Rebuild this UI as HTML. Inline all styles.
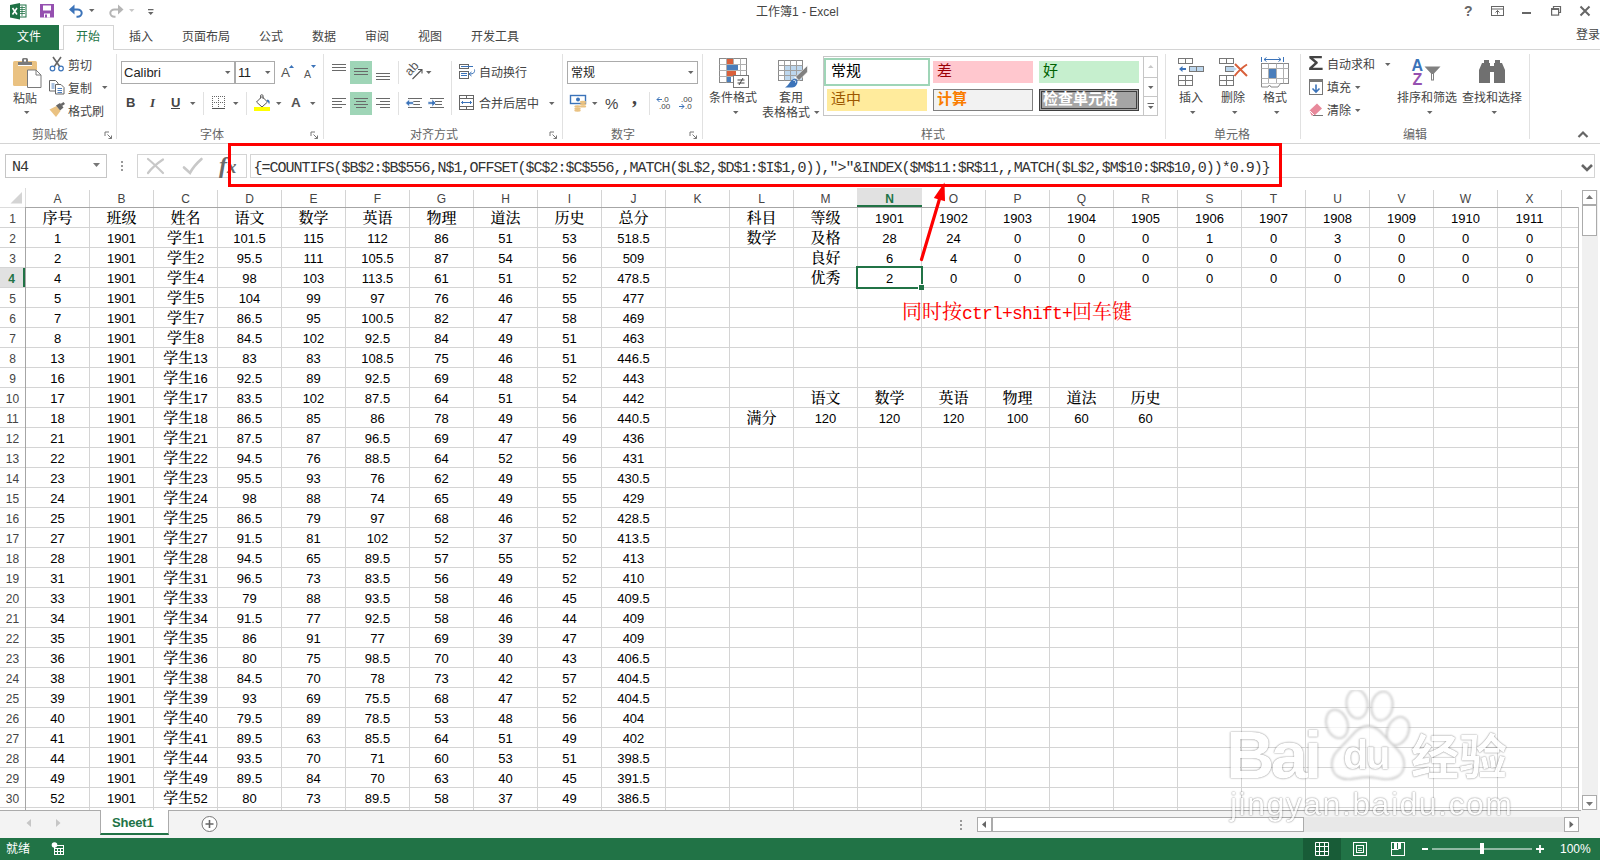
<!DOCTYPE html>
<html lang="zh-CN"><head><meta charset="utf-8"><title>工作簿1 - Excel</title>
<style>
*{box-sizing:border-box;margin:0;padding:0}
html,body{width:1600px;height:860px;overflow:hidden;background:#fff}
body{position:relative;font-family:"Liberation Sans","Noto Sans CJK SC",sans-serif;font-size:12px;color:#444}
.a{position:absolute}
.ui{position:absolute;white-space:nowrap;font-size:12px;line-height:14px;color:#444}
.sep{position:absolute;width:1px;background:#e1e1e1;top:54px;height:85px}
.glabel{position:absolute;top:128px;font-size:12px;line-height:14px;color:#666;white-space:nowrap;transform:translateX(-50%)}
.tab{position:absolute;top:30px;font-size:12px;line-height:14px;color:#444;white-space:nowrap}
/* grid */
#grid{position:absolute;left:0;top:188px;width:1581px;height:624px;overflow:hidden;
 background-color:#fff;}
#gl{position:absolute;left:25px;top:207px;width:1553px;height:603px;
 background-image:linear-gradient(to right,#d4d4d4 1px,transparent 1px),linear-gradient(to bottom,#d4d4d4 1px,transparent 1px);
 background-size:64px 20px;background-position:0 0}
.ch{position:absolute;top:190px;width:63px;height:17px;text-align:center;font-size:12px;line-height:19px;color:#444}
.ch.sel{background:#e1e1e1;color:#217346;font-weight:bold;border-bottom:2px solid #217346;top:188px;height:19px;line-height:23px;width:65px;margin-left:-1px}
.rh{position:absolute;left:0;width:25px;height:19px;text-align:center;font-size:12px;line-height:22px;color:#444}
.rh.sel{background:#e1e1e1;color:#217346;font-weight:bold;border-right:2px solid #217346}
.c{position:absolute;width:63px;height:19px;text-align:center;font-size:13px;line-height:22px;color:#000;white-space:nowrap;overflow:visible}
.wmt{position:absolute;white-space:nowrap;color:#fff;font-family:"Liberation Sans",sans-serif;text-shadow:0 0 2px rgba(0,0,0,.55),0 0 1px rgba(0,0,0,.45)}
.gal{font-size:15px;line-height:18px}
.cj{font-family:"Noto Serif CJK SC","Noto Sans CJK SC",serif;font-size:15px;line-height:1px;font-weight:500}
</style></head><body>

<!-- ===== title bar ===== -->
<div class="ui" style="left:756px;top:5px;font-size:12px;line-height:14px;color:#444">工作簿1 - Excel</div>
<svg class="a" style="left:0;top:0" width="170" height="24" viewBox="0 0 170 24">
 <!-- excel logo -->
 <rect x="17" y="5" width="9" height="12" fill="#fff" stroke="#1e7145" stroke-width="1"/>
 <path d="M19 7.5h6M19 9.5h6M19 11.500h6M19 13.500h6M22 6v10" stroke="#1e7145" stroke-width="0.8" fill="none"/>
 <path d="M10 5l10-2v16.500l-10-2z" fill="#1e7145"/>
 <path d="M12.500 8l4.500 6.500M17 8l-4.500 6.500" stroke="#fff" stroke-width="1.600" fill="none"/>
 <!-- save -->
 <path d="M40 4h14v13.500h-14z" fill="#9550b0"/>
 <rect x="43" y="5.500" width="8" height="5" fill="#fff"/>
 <rect x="44" y="13.500" width="6" height="4" fill="#fff"/><rect x="45" y="14.500" width="2" height="3" fill="#9550b0"/>
 <!-- undo -->
 <path d="M72 9.500h5.500a4.200 3.600 0 0 1 0 7.200h-1" stroke="#3b73b9" stroke-width="2" fill="none"/>
 <path d="M69 9.500l5.500-5v10z" fill="#3b73b9"/>
 <path d="M89 9h5.500l-2.750 3z" fill="#666"/>
 <!-- redo -->
 <path d="M120 9.500h-5.500a4.200 3.600 0 0 0 0 7.200h1" stroke="#b5b5b5" stroke-width="2" fill="none"/>
 <path d="M123.500 9.500l-5.500-5v10z" fill="#b5b5b5"/>
 <path d="M129 9h5.500l-2.750 3z" fill="#c8c8c8"/>
 <!-- customize -->
 <path d="M148 9h5.500v1.200h-5.500z M148 12h5.500l-2.750 3z" fill="#666"/>
</svg>
<div class="ui" style="left:1464px;top:3px;font-size:14px;line-height:16px;font-weight:bold;color:#666">?</div>
<svg class="a" style="left:1488px;top:3px" width="110" height="18" viewBox="0 0 110 18">
 <rect x="3.500" y="3.500" width="12" height="9" fill="none" stroke="#666" stroke-width="1"/>
 <path d="M3.500 6h12" stroke="#666" stroke-width="1"/>
 <path d="M9.500 11.500v-4M7.500 9.500l2-2l2 2" stroke="#666" stroke-width="1" fill="none"/>
 <rect x="34" y="9" width="9" height="2" fill="#666"/>
 <path d="M65.500 5.500v-2h7v6h-2" stroke="#666" stroke-width="1.200" fill="none"/>
 <rect x="63.600" y="6.100" width="7" height="6" fill="none" stroke="#666" stroke-width="1.200"/>
 <path d="M63 6h8" stroke="#666" stroke-width="1.800"/>
 <path d="M92.500 3.500l9 9M101.500 3.500l-9 9" stroke="#666" stroke-width="2" fill="none"/>
</svg>


<!-- ===== tabs ===== -->
<div class="a" style="left:0;top:49px;width:1600px;height:1px;background:#d4d4d4"></div>
<div class="a" style="left:0;top:25px;width:59px;height:25px;background:#217346"></div>
<div class="tab" style="left:17px;color:#fff">文件</div>
<div class="a" style="left:63px;top:25px;width:51px;height:25px;border:1px solid #d4d4d4;border-bottom:none;background:#fff"></div>
<div class="tab" style="left:76px;color:#217346">开始</div>
<div class="tab" style="left:129px">插入</div>
<div class="tab" style="left:182px">页面布局</div>
<div class="tab" style="left:259px">公式</div>
<div class="tab" style="left:312px">数据</div>
<div class="tab" style="left:365px">审阅</div>
<div class="tab" style="left:418px">视图</div>
<div class="tab" style="left:471px">开发工具</div>
<div class="ui" style="left:1576px;top:28px;font-size:12px">登录</div>

<!-- ===== ribbon ===== -->
<div class="a" style="left:0;top:143px;width:1600px;height:1px;background:#d4d4d4"></div>
<div class="sep" style="left:116px"></div><div class="sep" style="left:323px"></div><div class="sep" style="left:562px"></div>
<div class="sep" style="left:702px"></div><div class="sep" style="left:1165px"></div><div class="sep" style="left:1300px"></div><div class="sep" style="left:1529px"></div>
<div class="glabel" style="left:50px">剪贴板</div>
<div class="glabel" style="left:212px">字体</div>
<div class="glabel" style="left:434px">对齐方式</div>
<div class="glabel" style="left:623px">数字</div>
<div class="glabel" style="left:933px">样式</div>
<div class="glabel" style="left:1232px">单元格</div>
<div class="glabel" style="left:1415px">编辑</div>
<!-- clipboard texts -->
<div class="ui" style="left:13px;top:92px">粘贴</div>
<div class="ui" style="left:68px;top:59px">剪切</div>
<div class="ui" style="left:68px;top:82px">复制</div>
<div class="ui" style="left:68px;top:105px">格式刷</div>
<!-- font group -->
<div class="a" style="left:121px;top:61px;width:114px;height:23px;border:1px solid #ababab;background:#fff"></div>
<div class="a" style="left:235px;top:61px;width:40px;height:23px;border:1px solid #ababab;background:#fff"></div>
<div class="ui" style="left:124px;top:65px;font-size:13px;line-height:15px;color:#1e1e1e">Calibri</div>
<div class="ui" style="left:238px;top:65px;font-size:13px;line-height:15px;color:#1e1e1e;letter-spacing:-0.5px">11</div>
<div class="ui" style="left:281px;top:65px;font-size:13.500px;line-height:15px;color:#555">A</div>
<div class="ui" style="left:304px;top:68px;font-size:10.500px;line-height:12px;color:#555">A</div>
<div class="ui" style="left:126px;top:95px;font-size:13px;line-height:15px;font-weight:bold;color:#444">B</div>
<div class="ui" style="left:150px;top:95px;font-size:13px;line-height:15px;font-style:italic;font-family:'Liberation Serif',serif;font-weight:bold;color:#444">I</div>
<div class="ui" style="left:171px;top:95px;font-size:13px;line-height:15px;color:#444;font-weight:bold">U</div>
<div class="a" style="left:171px;top:108px;width:9px;height:1px;background:#444"></div>
<div class="ui" style="left:291px;top:95px;font-size:13.500px;line-height:15px;font-weight:bold;color:#555">A</div>
<div class="a" style="left:203px;top:92px;width:1px;height:23px;background:#e1e1e1"></div>
<div class="a" style="left:246px;top:92px;width:1px;height:23px;background:#e1e1e1"></div>
<!-- alignment group -->
<div class="a" style="left:350px;top:61px;width:22px;height:23px;background:#9fd5b7"></div>
<div class="a" style="left:350px;top:92px;width:22px;height:23px;background:#9fd5b7"></div>
<div class="a" style="left:398px;top:61px;width:1px;height:23px;background:#e1e1e1"></div>
<div class="a" style="left:398px;top:92px;width:1px;height:23px;background:#e1e1e1"></div>
<div class="a" style="left:451px;top:61px;width:1px;height:54px;background:#e1e1e1"></div>
<div class="ui" style="left:479px;top:66px">自动换行</div>
<div class="ui" style="left:479px;top:97px">合并后居中</div>
<!-- number group -->
<div class="a" style="left:567px;top:61px;width:131px;height:23px;border:1px solid #ababab;background:#fff"></div>
<div class="ui" style="left:571px;top:66px;color:#1e1e1e">常规</div>
<div class="ui" style="left:605px;top:95px;font-size:15px;line-height:18px;color:#444">%</div>
<div class="ui" style="left:632px;top:86px;font-size:20px;line-height:22px;font-weight:bold;font-family:'Liberation Serif',serif;color:#444">,</div>
<div class="a" style="left:649px;top:92px;width:1px;height:23px;background:#e1e1e1"></div>
<!-- styles group -->
<div class="ui" style="left:709px;top:91px">条件格式</div>
<div class="ui" style="left:779px;top:91px">套用</div>
<div class="ui" style="left:762px;top:106px">表格格式</div>
<div class="a" style="left:823px;top:56px;width:335px;height:60px;border:1px solid #c6c6c6;background:#fff"></div>
<div class="a" style="left:1143px;top:56px;width:15px;height:60px;border:1px solid #c6c6c6;background:#fff"></div>
<div class="a" style="left:1143px;top:77px;width:15px;height:20px;border:1px solid #c6c6c6;border-left:none;border-right:none"></div>
<div class="a" style="left:824px;top:58px;width:106px;height:28px;border:2px solid #9fd5b7;background:#fff"></div>
<div class="ui gal" style="left:831px;top:62px;color:#000">常规</div>
<div class="a" style="left:933px;top:61px;width:100px;height:22px;background:#ffc7ce"></div>
<div class="ui gal" style="left:937px;top:62px;color:#9c0006">差</div>
<div class="a" style="left:1039px;top:61px;width:100px;height:22px;background:#c6efce"></div>
<div class="ui gal" style="left:1043px;top:62px;color:#006100">好</div>
<div class="a" style="left:827px;top:89px;width:100px;height:22px;background:#ffeb9c"></div>
<div class="ui gal" style="left:831px;top:90px;color:#9c5700">适中</div>
<div class="a" style="left:933px;top:89px;width:100px;height:22px;background:#f2f2f2;border:1px solid #7f7f7f"></div>
<div class="ui gal" style="left:937px;top:90px;color:#fa7d00;font-weight:bold">计算</div>
<div class="a" style="left:1039px;top:89px;width:100px;height:22px;background:#a5a5a5;border:3px double #3f3f3f"></div>
<div class="ui gal" style="left:1043px;top:90px;color:#fff;font-weight:bold">检查单元格</div>
<!-- cells group -->
<div class="ui" style="left:1179px;top:91px">插入</div>
<div class="ui" style="left:1221px;top:91px">删除</div>
<div class="ui" style="left:1263px;top:91px">格式</div>
<!-- editing group -->
<div class="ui" style="left:1327px;top:58px">自动求和</div>
<div class="ui" style="left:1327px;top:81px">填充</div>
<div class="ui" style="left:1327px;top:104px">清除</div>
<div class="ui" style="left:1397px;top:91px">排序和筛选</div>
<div class="ui" style="left:1462px;top:91px">查找和选择</div>
<div class="ui" style="left:1308px;top:51px;font-size:21px;line-height:24px;font-weight:bold;color:#444;transform:scaleX(1.22);transform-origin:0 0">Σ</div>
<svg class="a" style="left:0;top:0" width="720" height="145" viewBox="0 0 720 145" font-family="Liberation Sans, sans-serif">
<defs>
 <path id="dd" d="M0 0h5.500l-2.750 3z" fill="#666"/>
 <path id="dl" d="M0 0h4M0 0v4M2.500 2.500l4 4M6.500 3.500v3h-3" stroke="#777" stroke-width="1" fill="none"/>
</defs>
<!-- paste -->
<rect x="13" y="61" width="24" height="25" rx="1.500" fill="#eac282"/>
<path d="M18 65v-3h4v-2.500a1.500 1.500 0 0 1 1.500-1.500h3a1.500 1.500 0 0 1 1.500 1.500v2.500h4v3z" fill="#7a7a7a"/><rect x="24" y="59.500" width="2" height="2" fill="#fff"/><rect x="18" y="65" width="14" height="1" fill="#fff"/>
<path d="M27.500 70h8.500l5 5v12.500h-13.500z" fill="#fff" stroke="#7a7a7a" stroke-width="1"/>
<path d="M36 70v5h5" fill="none" stroke="#7a7a7a" stroke-width="1"/>
<use href="#dd" x="24" y="111"/>
<!-- scissors -->
<path d="M53 57l7 10M61 57l-7 10" stroke="#666" stroke-width="1.600" fill="none"/>
<circle cx="52.500" cy="68.500" r="2.300" fill="#fff" stroke="#3b73b9" stroke-width="1.200"/>
<circle cx="61" cy="68.500" r="2.300" fill="#fff" stroke="#3b73b9" stroke-width="1.200"/>
<!-- copy -->
<path d="M49.500 80.500h6l2.500 2.500v8h-8.500z" fill="#fff" stroke="#666" stroke-width="1"/>
<path d="M51.500 84h3M51.500 86h3M51.500 88h3" stroke="#3b73b9" stroke-width="0.900"/>
<path d="M55.500 84.500h5.500l3 3v6.500h-8.500z" fill="#fff" stroke="#666" stroke-width="1"/>
<path d="M57.500 88.500h4.500M57.500 90.500h4.500M57.500 92.500h4.500" stroke="#3b73b9" stroke-width="0.900"/>
<use href="#dd" x="102" y="86"/>
<!-- format painter -->
<path d="M49.500 109.500l7-3.500l4 5l-4.500 6z" fill="#eac282"/>
<path d="M56 105.500l4-2.500l3.500 4.500l-3.500 3z" fill="#666"/>
<path d="M60.500 104l3-2l1.500 2l-3 2z" fill="#666"/>
<use href="#dl" x="105" y="132"/>
<!-- font group -->
<use href="#dd" x="225" y="71"/><use href="#dd" x="265" y="71"/>
<path d="M289 68l2.500-3l2.500 3z" fill="#3b73b9"/>
<path d="M311 65l2.500 3l2.500-3z" fill="#3b73b9"/>
<use href="#dd" x="190" y="102"/>
<!-- borders icon -->
<path d="M212 96.500h13M212 102.500h13M212.500 96v12M218.500 96v12M224.500 96v12" stroke="#666" stroke-width="1" stroke-dasharray="1 1" fill="none" shape-rendering="crispEdges"/>
<path d="M212 108.500h13" stroke="#555" stroke-width="1"/>
<use href="#dd" x="233" y="102"/>
<!-- fill bucket -->
<path d="M256.500 102l5.500-5.500l5.500 5.500l-5.500 5z" fill="#fff" stroke="#555" stroke-width="1"/>
<path d="M260.500 98.500v-2.500a1.300 1.300 0 0 1 2.600 0v3" fill="none" stroke="#555" stroke-width="0.900"/>
<path d="M267.500 99.500c2 .5 3 2.500 1.500 5c-.3-2-1-3-2.500-3.500z" fill="#3b73b9"/>
<rect x="254" y="107" width="16" height="4" fill="#ffff00"/>
<use href="#dd" x="276" y="102"/>
<use href="#dd" x="310" y="102"/>
<use href="#dl" x="311" y="132"/>
<!-- alignment -->
<g stroke="#696969" stroke-width="1" fill="none">
<path d="M332 64.500h14M332 67.500h14M332 70.500h14"/>
<path d="M354 68.500h14M354 71.500h14M354 74.500h14"/>
<path d="M376 73.500h14M376 76.500h14M376 79.500h14"/>
<path d="M332 98.500h14M332 101.500h10M332 104.500h14M332 107.500h10"/>
<path d="M354 98.500h14M356 101.500h10M354 104.500h14M356 107.500h10"/>
<path d="M376 98.500h14M380 101.500h10M376 104.500h14M380 107.500h10"/>
<path d="M408 98.500h14M413 101.500h7M413 104.500h7M408 107.500h14"/>
<path d="M430 98.500h14M435 101.500h7M435 104.500h7M430 107.500h14"/>
</g>
<path d="M405.500 103l4-3.800v2.600h4v2.400h-4v2.600z" fill="#3b73b9" stroke="#fff" stroke-width="0.600"/>
<path d="M436 103l-4-3.800v2.600h-4v2.400h4v2.600z" fill="#3b73b9" stroke="#fff" stroke-width="0.600"/>
<!-- orientation -->
<text x="0" y="0" font-size="12.500" fill="#555" transform="translate(410 76.500) rotate(-48)">ab</text>
<path d="M412.500 79l9.500-9.500M418 69.500h4v4" stroke="#555" stroke-width="1.100" fill="none"/>
<use href="#dd" x="426" y="71"/>
<!-- wrap text -->
<rect x="459.500" y="64.500" width="9" height="4" fill="#fff" stroke="#666" stroke-width="1"/>
<path d="M461 66.500h12" stroke="#3b73b9" stroke-width="1"/>
<rect x="459.500" y="71.500" width="9" height="7" fill="#fff" stroke="#666" stroke-width="1"/>
<path d="M461 73.500h6M461 75.500h6" stroke="#3b73b9" stroke-width="1"/>
<path d="M474.500 69.500c.5 3-1 4.500-5 4.500M471.500 72l-2.500 2l2.500 2" stroke="#3b73b9" stroke-width="1" fill="none"/>
<!-- merge -->
<rect x="459.500" y="95.500" width="14" height="14" fill="#fff" stroke="#666" stroke-width="1"/>
<path d="M459.500 98.500h14M459.500 106.500h14M466.500 95.500v3M466.500 106.500v3" stroke="#666" stroke-width="1"/>
<path d="M461.500 102.500h10M463 101l-1.500 1.500l1.500 1.500M470 101l1.500 1.500l-1.500 1.500" stroke="#3b73b9" stroke-width="1" fill="none"/>
<use href="#dd" x="549" y="102"/>
<use href="#dl" x="550" y="132"/>
<!-- number -->
<use href="#dd" x="688" y="71"/>
<rect x="570.500" y="95.500" width="15" height="8" fill="#fff" stroke="#3b73b9" stroke-width="1.400"/>
<circle cx="578" cy="99.500" r="2" fill="#3b73b9"/>
<g fill="#eac282"><ellipse cx="583" cy="102" rx="3.200" ry="1.200"/><ellipse cx="583" cy="104.200" rx="3.200" ry="1.200"/><ellipse cx="583" cy="106.400" rx="3.200" ry="1.200"/>
<ellipse cx="577.500" cy="106.500" rx="3.200" ry="1.200"/><ellipse cx="577.500" cy="108.700" rx="3.200" ry="1.200"/><ellipse cx="577.500" cy="110.500" rx="3.200" ry="1.200"/></g>
<use href="#dd" x="592" y="102"/>
<text x="662" y="102" font-size="8" fill="#444">.0</text><text x="659" y="109" font-size="8" fill="#444">.00</text>
<path d="M657 99.500h5M659.500 97l-2.500 2.500l2.500 2.500" stroke="#3b73b9" stroke-width="1" fill="none"/>
<text x="681" y="102" font-size="8" fill="#444">.00</text><text x="685" y="109" font-size="8" fill="#444">.0</text>
<path d="M679 106.500h5M681.500 104l2.500 2.500l-2.500 2.500" stroke="#3b73b9" stroke-width="1" fill="none"/>
<use href="#dl" x="690" y="132"/>
</svg>
<svg class="a" style="left:700px;top:0" width="900" height="145" viewBox="700 0 900 145" font-family="Liberation Sans, sans-serif">
<defs>
 <path id="dd2" d="M0 0h5.500l-2.750 3z" fill="#666"/>
</defs>
<!-- conditional formatting -->
<rect x="719.500" y="58.500" width="27" height="24" fill="#fff" stroke="#8a8a8a" stroke-width="1"/>
<path d="M726.500 58.500v24M733.500 58.500v24M740.500 58.500v24M719.500 64.500h27M719.500 70.500h27M719.500 76.500h27" stroke="#b0b0b0" stroke-width="1" fill="none"/>
<rect x="727" y="59" width="6" height="5" fill="#d9603b"/><rect x="727" y="65" width="11" height="5" fill="#4a7ebb"/>
<rect x="727" y="71" width="9" height="5" fill="#d9603b"/><rect x="727" y="77" width="4" height="5" fill="#4a7ebb"/>
<rect x="733.500" y="75.500" width="15" height="12" fill="#fff" stroke="#777" stroke-width="1"/>
<path d="M737.500 80h7M737.500 83h7M743 78l-4 7" stroke="#444" stroke-width="1" fill="none"/>
<use href="#dd2" x="733" y="111"/>
<!-- format as table -->
<rect x="778.500" y="60.500" width="24" height="20" fill="#fff" stroke="#8a8a8a" stroke-width="1"/>
<rect x="785" y="66" width="17" height="14" fill="#bdd7ee"/>
<path d="M784.500 60.500v20M790.500 60.500v20M796.500 60.500v20M778.500 65.500h24M778.500 70.500h24M778.500 75.500h24" stroke="#a0a0a0" stroke-width="1" fill="none"/>
<path d="M807.500 65.500v6.500l-8.500 8.500l-3.500-3.500z" fill="#808080" stroke="#fff" stroke-width="0.600"/>
<path d="M796.500 78.500l-2-1.500" stroke="#fff" stroke-width="1.200"/>
<path d="M785 87.500c4-2 5-7 8.500-8.500c3-1 5 2 3.500 5c-1 2.500-3 3.500-5 3.500z" fill="#3b73b9"/>
<path d="M793.500 80.500c1.500-.5 2.500.5 2 2" stroke="#fff" stroke-width="1" fill="none"/>
<use href="#dd2" x="814" y="111"/>
<!-- gallery scroll arrows -->
<path d="M1148 68h5.500l-2.750-3z" fill="#c8c8c8"/>
<use href="#dd2" x="1148" y="86"/>
<path d="M1147.500 103.500h6.500" stroke="#666" stroke-width="1"/><use href="#dd2" x="1148" y="106"/>
<!-- insert -->
<g fill="#fff" stroke="#777" stroke-width="1">
<rect x="1178.500" y="58.500" width="14" height="5"/><path d="M1185.500 58.500v5"/>
<rect x="1178.500" y="75.500" width="14" height="10"/><path d="M1185.500 75.500v10M1178.500 80.500h14"/>
<rect x="1219.500" y="58.500" width="14" height="5"/><path d="M1226.500 58.500v5"/>
<rect x="1219.500" y="75.500" width="14" height="10"/><path d="M1226.500 75.500v10M1219.500 80.500h14"/>
</g>
<rect x="1189.500" y="66.500" width="14" height="5" fill="#bdd7ee" stroke="#777" stroke-width="1"/><path d="M1196.500 66.500v5" stroke="#777"/>
<path d="M1179 69l3.500-3v2h3.500v2h-3.500v2z" fill="#3b73b9"/>
<use href="#dd2" x="1190" y="111"/>
<!-- delete -->
<rect x="1225.500" y="66.500" width="8" height="5" fill="#bdd7ee" stroke="#777" stroke-width="1"/><path d="M1233 66.500l4 2.500l-4 2.500" fill="#bdd7ee"/>
<path d="M1235 64l12 12M1247 64.500c-5 3-9 7-12.500 11.500" stroke="#d9603b" stroke-width="2" fill="none"/>
<use href="#dd2" x="1232" y="111"/>
<!-- format -->
<path d="M1261.500 57v5M1283.500 57v5M1264 59.500h17M1266.500 57.500l-2.500 2l2.500 2M1278.500 57.500l2.500 2l-2.500 2" stroke="#3b73b9" stroke-width="1" fill="none"/>
<rect x="1261.500" y="63.500" width="27" height="20" fill="#fff" stroke="#8a8a8a" stroke-width="1"/>
<path d="M1268.500 63.500v20M1276.500 63.500v20M1283.500 63.500v20M1261.500 68.500h27M1261.500 78.500h27" stroke="#b0b0b0" stroke-width="1" fill="none"/>
<rect x="1269" y="69" width="7" height="9" fill="#4a7ebb"/>
<path d="M1261.500 83.500v3.500h6.500l1.500-2l1.500 2h7l2.500-3.500" stroke="#8a8a8a" stroke-width="1" fill="#fff"/>
<use href="#dd2" x="1274" y="111"/>
<!-- autosum dd -->
<use href="#dd2" x="1385" y="63"/>
<!-- fill -->
<rect x="1309.500" y="79.500" width="13" height="15" fill="#fff" stroke="#777" stroke-width="1"/><rect x="1309" y="79" width="14" height="3" fill="#777"/>
<path d="M1316 84.500v7M1312.500 88.500l3.500 3.500l3.500-3.500" stroke="#3b73b9" stroke-width="1.600" fill="none"/>
<use href="#dd2" x="1355" y="86"/>
<!-- clear -->
<path d="M1309.500 110.500l7.500-7l5 5l-7.500 7h-3z" fill="#e8899b"/><path d="M1309.500 110.500l5 5" stroke="#fff" stroke-width="1"/>
<path d="M1313 115.500h10" stroke="#777" stroke-width="1"/>
<use href="#dd2" x="1355" y="109"/>
<!-- sort & filter -->
<text x="1411.500" y="71" font-size="16" font-weight="bold" fill="#3b73b9">A</text>
<text x="1412.500" y="85" font-size="16" font-weight="bold" fill="#9550b0">Z</text>
<path d="M1424.500 66.500h16l-6.500 7v7h-3v-7z" fill="#808080"/><rect x="1432" y="74" width="1" height="5.500" fill="#fff"/>
<use href="#dd2" x="1427" y="111"/>
<!-- binoculars -->
<g fill="#707070">
<path d="M1484 60h5v3h1v20h-11v-13l3-7h2z"/><path d="M1495 60h5v3h2l3 7v13h-11v-20h1z"/><rect x="1489" y="66" width="6" height="6"/>
</g>
<use href="#dd2" x="1491.500" y="111"/>
<path d="M1578.500 137l4.500-4.500l4.500 4.500" stroke="#666" stroke-width="2.200" fill="none"/>
</svg>



<!-- ===== formula bar ===== -->
<div class="a" style="left:5px;top:154px;width:102px;height:24px;border:1px solid #c6c6c6;background:#fff"></div>
<div class="a" style="left:12px;top:159px;font-family:'Liberation Mono','Noto Serif CJK SC',monospace;font-size:15px;line-height:18px;letter-spacing:-1px;color:#333">N4</div>
<div class="a" style="left:137px;top:154px;width:110px;height:24px;border:1px solid #d4d4d4;background:#fff"></div>
<div class="a" style="left:250px;top:154px;width:1345px;height:24px;border:1px solid #d4d4d4;background:#fff"></div>
<div class="a" id="ftext" style="left:253.500px;top:160px;font-family:'Liberation Mono',monospace;font-size:15px;line-height:18px;letter-spacing:-1px;color:#333;white-space:pre">{=COUNTIFS($B$2:$B$556,N$1,OFFSET($C$2:$C$556,,MATCH($L$2,$D$1:$I$1,0)),"&gt;"&amp;INDEX($M$11:$R$11,,MATCH($L$2,$M$10:$R$10,0))*0.9)}</div>
<svg class="a" style="left:85px;top:150px" width="170" height="32" viewBox="85 150 170 32">
 <path d="M93 163h7l-3.500 4z" fill="#777"/>
 <rect x="121" y="161" width="2" height="2" fill="#999"/><rect x="121" y="165" width="2" height="2" fill="#999"/><rect x="121" y="169" width="2" height="2" fill="#999"/>
 <path d="M148 159c5 4 10 9 15 14M163 159.500c-6 4-11 8-15 13.500" stroke="#c8c8c8" stroke-width="2.200" fill="none" stroke-linecap="round"/>
 <path d="M184 167.500l6 5.500c3-6 7-10 11.500-14" stroke="#c8c8c8" stroke-width="2.600" fill="none" stroke-linecap="round"/>
</svg>
<div class="a" style="left:219px;top:152px;font-family:'Liberation Serif',serif;font-style:italic;font-weight:bold;font-size:24px;line-height:26px;color:#6a6a6a;letter-spacing:0px">f<span style="font-size:19px;letter-spacing:0">x</span></div>
<svg class="a" style="left:1578px;top:160px" width="18" height="16" viewBox="1578 160 18 16"><path d="M1582 165l5 5l5-5" stroke="#666" stroke-width="2.600" fill="none"/></svg>


<!-- ===== grid ===== -->
<div id="gl"></div>
<div class="a" style="left:0;top:207px;width:25px;height:601px;background-image:linear-gradient(to bottom,#d4d4d4 1px,transparent 1px);background-size:25px 20px"></div>
<div class="a" style="left:25px;top:190px;width:1553px;height:17px;background-image:linear-gradient(to right,#d4d4d4 1px,transparent 1px);background-size:64px 17px"></div>
<div class="a" style="left:25px;top:188px;width:1px;height:20px;background:#dcdcdc"></div><div class="a" style="left:25px;top:207px;width:1px;height:603px;background:#a6a6a6"></div>
<div class="a" style="left:0;top:207px;width:25px;height:1px;background:#dcdcdc"></div><div class="a" style="left:25px;top:207px;width:1554px;height:1px;background:#a6a6a6"></div>
<svg class="a" style="left:8px;top:190px" width="16" height="16" viewBox="0 0 16 16"><path d="M14 2v11.500h-11.500z" fill="#d4d4d4"/></svg>
<div class="ch" style="left:26px">A</div>
<div class="ch" style="left:90px">B</div>
<div class="ch" style="left:154px">C</div>
<div class="ch" style="left:218px">D</div>
<div class="ch" style="left:282px">E</div>
<div class="ch" style="left:346px">F</div>
<div class="ch" style="left:410px">G</div>
<div class="ch" style="left:474px">H</div>
<div class="ch" style="left:538px">I</div>
<div class="ch" style="left:602px">J</div>
<div class="ch" style="left:666px">K</div>
<div class="ch" style="left:730px">L</div>
<div class="ch" style="left:794px">M</div>
<div class="ch sel" style="left:858px">N</div>
<div class="ch" style="left:922px">O</div>
<div class="ch" style="left:986px">P</div>
<div class="ch" style="left:1050px">Q</div>
<div class="ch" style="left:1114px">R</div>
<div class="ch" style="left:1178px">S</div>
<div class="ch" style="left:1242px">T</div>
<div class="ch" style="left:1306px">U</div>
<div class="ch" style="left:1370px">V</div>
<div class="ch" style="left:1434px">W</div>
<div class="ch" style="left:1498px">X</div>
<div class="rh" style="top:208px">1</div>
<div class="rh" style="top:228px">2</div>
<div class="rh" style="top:248px">3</div>
<div class="rh sel" style="top:268px">4</div>
<div class="rh" style="top:288px">5</div>
<div class="rh" style="top:308px">6</div>
<div class="rh" style="top:328px">7</div>
<div class="rh" style="top:348px">8</div>
<div class="rh" style="top:368px">9</div>
<div class="rh" style="top:388px">10</div>
<div class="rh" style="top:408px">11</div>
<div class="rh" style="top:428px">12</div>
<div class="rh" style="top:448px">13</div>
<div class="rh" style="top:468px">14</div>
<div class="rh" style="top:488px">15</div>
<div class="rh" style="top:508px">16</div>
<div class="rh" style="top:528px">17</div>
<div class="rh" style="top:548px">18</div>
<div class="rh" style="top:568px">19</div>
<div class="rh" style="top:588px">20</div>
<div class="rh" style="top:608px">21</div>
<div class="rh" style="top:628px">22</div>
<div class="rh" style="top:648px">23</div>
<div class="rh" style="top:668px">24</div>
<div class="rh" style="top:688px">25</div>
<div class="rh" style="top:708px">26</div>
<div class="rh" style="top:728px">27</div>
<div class="rh" style="top:748px">28</div>
<div class="rh" style="top:768px">29</div>
<div class="rh" style="top:788px">30</div>
<div class="c" style="left:26px;top:208px"><span class="cj">序号</span></div>
<div class="c" style="left:90px;top:208px"><span class="cj">班级</span></div>
<div class="c" style="left:154px;top:208px"><span class="cj">姓名</span></div>
<div class="c" style="left:218px;top:208px"><span class="cj">语文</span></div>
<div class="c" style="left:282px;top:208px"><span class="cj">数学</span></div>
<div class="c" style="left:346px;top:208px"><span class="cj">英语</span></div>
<div class="c" style="left:410px;top:208px"><span class="cj">物理</span></div>
<div class="c" style="left:474px;top:208px"><span class="cj">道法</span></div>
<div class="c" style="left:538px;top:208px"><span class="cj">历史</span></div>
<div class="c" style="left:602px;top:208px"><span class="cj">总分</span></div>
<div class="c" style="left:730px;top:208px"><span class="cj">科目</span></div>
<div class="c" style="left:794px;top:208px"><span class="cj">等级</span></div>
<div class="c" style="left:858px;top:208px">1901</div>
<div class="c" style="left:922px;top:208px">1902</div>
<div class="c" style="left:986px;top:208px">1903</div>
<div class="c" style="left:1050px;top:208px">1904</div>
<div class="c" style="left:1114px;top:208px">1905</div>
<div class="c" style="left:1178px;top:208px">1906</div>
<div class="c" style="left:1242px;top:208px">1907</div>
<div class="c" style="left:1306px;top:208px">1908</div>
<div class="c" style="left:1370px;top:208px">1909</div>
<div class="c" style="left:1434px;top:208px">1910</div>
<div class="c" style="left:1498px;top:208px">1911</div>
<div class="c" style="left:26px;top:228px">1</div>
<div class="c" style="left:90px;top:228px">1901</div>
<div class="c" style="left:154px;top:228px"><span class="cj">学生</span>1</div>
<div class="c" style="left:218px;top:228px">101.5</div>
<div class="c" style="left:282px;top:228px">115</div>
<div class="c" style="left:346px;top:228px">112</div>
<div class="c" style="left:410px;top:228px">86</div>
<div class="c" style="left:474px;top:228px">51</div>
<div class="c" style="left:538px;top:228px">53</div>
<div class="c" style="left:602px;top:228px">518.5</div>
<div class="c" style="left:730px;top:228px"><span class="cj">数学</span></div>
<div class="c" style="left:794px;top:228px"><span class="cj">及格</span></div>
<div class="c" style="left:858px;top:228px">28</div>
<div class="c" style="left:922px;top:228px">24</div>
<div class="c" style="left:986px;top:228px">0</div>
<div class="c" style="left:1050px;top:228px">0</div>
<div class="c" style="left:1114px;top:228px">0</div>
<div class="c" style="left:1178px;top:228px">1</div>
<div class="c" style="left:1242px;top:228px">0</div>
<div class="c" style="left:1306px;top:228px">3</div>
<div class="c" style="left:1370px;top:228px">0</div>
<div class="c" style="left:1434px;top:228px">0</div>
<div class="c" style="left:1498px;top:228px">0</div>
<div class="c" style="left:26px;top:248px">2</div>
<div class="c" style="left:90px;top:248px">1901</div>
<div class="c" style="left:154px;top:248px"><span class="cj">学生</span>2</div>
<div class="c" style="left:218px;top:248px">95.5</div>
<div class="c" style="left:282px;top:248px">111</div>
<div class="c" style="left:346px;top:248px">105.5</div>
<div class="c" style="left:410px;top:248px">87</div>
<div class="c" style="left:474px;top:248px">54</div>
<div class="c" style="left:538px;top:248px">56</div>
<div class="c" style="left:602px;top:248px">509</div>
<div class="c" style="left:794px;top:248px"><span class="cj">良好</span></div>
<div class="c" style="left:858px;top:248px">6</div>
<div class="c" style="left:922px;top:248px">4</div>
<div class="c" style="left:986px;top:248px">0</div>
<div class="c" style="left:1050px;top:248px">0</div>
<div class="c" style="left:1114px;top:248px">0</div>
<div class="c" style="left:1178px;top:248px">0</div>
<div class="c" style="left:1242px;top:248px">0</div>
<div class="c" style="left:1306px;top:248px">0</div>
<div class="c" style="left:1370px;top:248px">0</div>
<div class="c" style="left:1434px;top:248px">0</div>
<div class="c" style="left:1498px;top:248px">0</div>
<div class="c" style="left:26px;top:268px">4</div>
<div class="c" style="left:90px;top:268px">1901</div>
<div class="c" style="left:154px;top:268px"><span class="cj">学生</span>4</div>
<div class="c" style="left:218px;top:268px">98</div>
<div class="c" style="left:282px;top:268px">103</div>
<div class="c" style="left:346px;top:268px">113.5</div>
<div class="c" style="left:410px;top:268px">61</div>
<div class="c" style="left:474px;top:268px">51</div>
<div class="c" style="left:538px;top:268px">52</div>
<div class="c" style="left:602px;top:268px">478.5</div>
<div class="c" style="left:794px;top:268px"><span class="cj">优秀</span></div>
<div class="c" style="left:858px;top:268px">2</div>
<div class="c" style="left:922px;top:268px">0</div>
<div class="c" style="left:986px;top:268px">0</div>
<div class="c" style="left:1050px;top:268px">0</div>
<div class="c" style="left:1114px;top:268px">0</div>
<div class="c" style="left:1178px;top:268px">0</div>
<div class="c" style="left:1242px;top:268px">0</div>
<div class="c" style="left:1306px;top:268px">0</div>
<div class="c" style="left:1370px;top:268px">0</div>
<div class="c" style="left:1434px;top:268px">0</div>
<div class="c" style="left:1498px;top:268px">0</div>
<div class="c" style="left:26px;top:288px">5</div>
<div class="c" style="left:90px;top:288px">1901</div>
<div class="c" style="left:154px;top:288px"><span class="cj">学生</span>5</div>
<div class="c" style="left:218px;top:288px">104</div>
<div class="c" style="left:282px;top:288px">99</div>
<div class="c" style="left:346px;top:288px">97</div>
<div class="c" style="left:410px;top:288px">76</div>
<div class="c" style="left:474px;top:288px">46</div>
<div class="c" style="left:538px;top:288px">55</div>
<div class="c" style="left:602px;top:288px">477</div>
<div class="c" style="left:26px;top:308px">7</div>
<div class="c" style="left:90px;top:308px">1901</div>
<div class="c" style="left:154px;top:308px"><span class="cj">学生</span>7</div>
<div class="c" style="left:218px;top:308px">86.5</div>
<div class="c" style="left:282px;top:308px">95</div>
<div class="c" style="left:346px;top:308px">100.5</div>
<div class="c" style="left:410px;top:308px">82</div>
<div class="c" style="left:474px;top:308px">47</div>
<div class="c" style="left:538px;top:308px">58</div>
<div class="c" style="left:602px;top:308px">469</div>
<div class="c" style="left:26px;top:328px">8</div>
<div class="c" style="left:90px;top:328px">1901</div>
<div class="c" style="left:154px;top:328px"><span class="cj">学生</span>8</div>
<div class="c" style="left:218px;top:328px">84.5</div>
<div class="c" style="left:282px;top:328px">102</div>
<div class="c" style="left:346px;top:328px">92.5</div>
<div class="c" style="left:410px;top:328px">84</div>
<div class="c" style="left:474px;top:328px">49</div>
<div class="c" style="left:538px;top:328px">51</div>
<div class="c" style="left:602px;top:328px">463</div>
<div class="c" style="left:26px;top:348px">13</div>
<div class="c" style="left:90px;top:348px">1901</div>
<div class="c" style="left:154px;top:348px"><span class="cj">学生</span>13</div>
<div class="c" style="left:218px;top:348px">83</div>
<div class="c" style="left:282px;top:348px">83</div>
<div class="c" style="left:346px;top:348px">108.5</div>
<div class="c" style="left:410px;top:348px">75</div>
<div class="c" style="left:474px;top:348px">46</div>
<div class="c" style="left:538px;top:348px">51</div>
<div class="c" style="left:602px;top:348px">446.5</div>
<div class="c" style="left:26px;top:368px">16</div>
<div class="c" style="left:90px;top:368px">1901</div>
<div class="c" style="left:154px;top:368px"><span class="cj">学生</span>16</div>
<div class="c" style="left:218px;top:368px">92.5</div>
<div class="c" style="left:282px;top:368px">89</div>
<div class="c" style="left:346px;top:368px">92.5</div>
<div class="c" style="left:410px;top:368px">69</div>
<div class="c" style="left:474px;top:368px">48</div>
<div class="c" style="left:538px;top:368px">52</div>
<div class="c" style="left:602px;top:368px">443</div>
<div class="c" style="left:26px;top:388px">17</div>
<div class="c" style="left:90px;top:388px">1901</div>
<div class="c" style="left:154px;top:388px"><span class="cj">学生</span>17</div>
<div class="c" style="left:218px;top:388px">83.5</div>
<div class="c" style="left:282px;top:388px">102</div>
<div class="c" style="left:346px;top:388px">87.5</div>
<div class="c" style="left:410px;top:388px">64</div>
<div class="c" style="left:474px;top:388px">51</div>
<div class="c" style="left:538px;top:388px">54</div>
<div class="c" style="left:602px;top:388px">442</div>
<div class="c" style="left:794px;top:388px"><span class="cj">语文</span></div>
<div class="c" style="left:858px;top:388px"><span class="cj">数学</span></div>
<div class="c" style="left:922px;top:388px"><span class="cj">英语</span></div>
<div class="c" style="left:986px;top:388px"><span class="cj">物理</span></div>
<div class="c" style="left:1050px;top:388px"><span class="cj">道法</span></div>
<div class="c" style="left:1114px;top:388px"><span class="cj">历史</span></div>
<div class="c" style="left:26px;top:408px">18</div>
<div class="c" style="left:90px;top:408px">1901</div>
<div class="c" style="left:154px;top:408px"><span class="cj">学生</span>18</div>
<div class="c" style="left:218px;top:408px">86.5</div>
<div class="c" style="left:282px;top:408px">85</div>
<div class="c" style="left:346px;top:408px">86</div>
<div class="c" style="left:410px;top:408px">78</div>
<div class="c" style="left:474px;top:408px">49</div>
<div class="c" style="left:538px;top:408px">56</div>
<div class="c" style="left:602px;top:408px">440.5</div>
<div class="c" style="left:730px;top:408px"><span class="cj">满分</span></div>
<div class="c" style="left:794px;top:408px">120</div>
<div class="c" style="left:858px;top:408px">120</div>
<div class="c" style="left:922px;top:408px">120</div>
<div class="c" style="left:986px;top:408px">100</div>
<div class="c" style="left:1050px;top:408px">60</div>
<div class="c" style="left:1114px;top:408px">60</div>
<div class="c" style="left:26px;top:428px">21</div>
<div class="c" style="left:90px;top:428px">1901</div>
<div class="c" style="left:154px;top:428px"><span class="cj">学生</span>21</div>
<div class="c" style="left:218px;top:428px">87.5</div>
<div class="c" style="left:282px;top:428px">87</div>
<div class="c" style="left:346px;top:428px">96.5</div>
<div class="c" style="left:410px;top:428px">69</div>
<div class="c" style="left:474px;top:428px">47</div>
<div class="c" style="left:538px;top:428px">49</div>
<div class="c" style="left:602px;top:428px">436</div>
<div class="c" style="left:26px;top:448px">22</div>
<div class="c" style="left:90px;top:448px">1901</div>
<div class="c" style="left:154px;top:448px"><span class="cj">学生</span>22</div>
<div class="c" style="left:218px;top:448px">94.5</div>
<div class="c" style="left:282px;top:448px">76</div>
<div class="c" style="left:346px;top:448px">88.5</div>
<div class="c" style="left:410px;top:448px">64</div>
<div class="c" style="left:474px;top:448px">52</div>
<div class="c" style="left:538px;top:448px">56</div>
<div class="c" style="left:602px;top:448px">431</div>
<div class="c" style="left:26px;top:468px">23</div>
<div class="c" style="left:90px;top:468px">1901</div>
<div class="c" style="left:154px;top:468px"><span class="cj">学生</span>23</div>
<div class="c" style="left:218px;top:468px">95.5</div>
<div class="c" style="left:282px;top:468px">93</div>
<div class="c" style="left:346px;top:468px">76</div>
<div class="c" style="left:410px;top:468px">62</div>
<div class="c" style="left:474px;top:468px">49</div>
<div class="c" style="left:538px;top:468px">55</div>
<div class="c" style="left:602px;top:468px">430.5</div>
<div class="c" style="left:26px;top:488px">24</div>
<div class="c" style="left:90px;top:488px">1901</div>
<div class="c" style="left:154px;top:488px"><span class="cj">学生</span>24</div>
<div class="c" style="left:218px;top:488px">98</div>
<div class="c" style="left:282px;top:488px">88</div>
<div class="c" style="left:346px;top:488px">74</div>
<div class="c" style="left:410px;top:488px">65</div>
<div class="c" style="left:474px;top:488px">49</div>
<div class="c" style="left:538px;top:488px">55</div>
<div class="c" style="left:602px;top:488px">429</div>
<div class="c" style="left:26px;top:508px">25</div>
<div class="c" style="left:90px;top:508px">1901</div>
<div class="c" style="left:154px;top:508px"><span class="cj">学生</span>25</div>
<div class="c" style="left:218px;top:508px">86.5</div>
<div class="c" style="left:282px;top:508px">79</div>
<div class="c" style="left:346px;top:508px">97</div>
<div class="c" style="left:410px;top:508px">68</div>
<div class="c" style="left:474px;top:508px">46</div>
<div class="c" style="left:538px;top:508px">52</div>
<div class="c" style="left:602px;top:508px">428.5</div>
<div class="c" style="left:26px;top:528px">27</div>
<div class="c" style="left:90px;top:528px">1901</div>
<div class="c" style="left:154px;top:528px"><span class="cj">学生</span>27</div>
<div class="c" style="left:218px;top:528px">91.5</div>
<div class="c" style="left:282px;top:528px">81</div>
<div class="c" style="left:346px;top:528px">102</div>
<div class="c" style="left:410px;top:528px">52</div>
<div class="c" style="left:474px;top:528px">37</div>
<div class="c" style="left:538px;top:528px">50</div>
<div class="c" style="left:602px;top:528px">413.5</div>
<div class="c" style="left:26px;top:548px">28</div>
<div class="c" style="left:90px;top:548px">1901</div>
<div class="c" style="left:154px;top:548px"><span class="cj">学生</span>28</div>
<div class="c" style="left:218px;top:548px">94.5</div>
<div class="c" style="left:282px;top:548px">65</div>
<div class="c" style="left:346px;top:548px">89.5</div>
<div class="c" style="left:410px;top:548px">57</div>
<div class="c" style="left:474px;top:548px">55</div>
<div class="c" style="left:538px;top:548px">52</div>
<div class="c" style="left:602px;top:548px">413</div>
<div class="c" style="left:26px;top:568px">31</div>
<div class="c" style="left:90px;top:568px">1901</div>
<div class="c" style="left:154px;top:568px"><span class="cj">学生</span>31</div>
<div class="c" style="left:218px;top:568px">96.5</div>
<div class="c" style="left:282px;top:568px">73</div>
<div class="c" style="left:346px;top:568px">83.5</div>
<div class="c" style="left:410px;top:568px">56</div>
<div class="c" style="left:474px;top:568px">49</div>
<div class="c" style="left:538px;top:568px">52</div>
<div class="c" style="left:602px;top:568px">410</div>
<div class="c" style="left:26px;top:588px">33</div>
<div class="c" style="left:90px;top:588px">1901</div>
<div class="c" style="left:154px;top:588px"><span class="cj">学生</span>33</div>
<div class="c" style="left:218px;top:588px">79</div>
<div class="c" style="left:282px;top:588px">88</div>
<div class="c" style="left:346px;top:588px">93.5</div>
<div class="c" style="left:410px;top:588px">58</div>
<div class="c" style="left:474px;top:588px">46</div>
<div class="c" style="left:538px;top:588px">45</div>
<div class="c" style="left:602px;top:588px">409.5</div>
<div class="c" style="left:26px;top:608px">34</div>
<div class="c" style="left:90px;top:608px">1901</div>
<div class="c" style="left:154px;top:608px"><span class="cj">学生</span>34</div>
<div class="c" style="left:218px;top:608px">91.5</div>
<div class="c" style="left:282px;top:608px">77</div>
<div class="c" style="left:346px;top:608px">92.5</div>
<div class="c" style="left:410px;top:608px">58</div>
<div class="c" style="left:474px;top:608px">46</div>
<div class="c" style="left:538px;top:608px">44</div>
<div class="c" style="left:602px;top:608px">409</div>
<div class="c" style="left:26px;top:628px">35</div>
<div class="c" style="left:90px;top:628px">1901</div>
<div class="c" style="left:154px;top:628px"><span class="cj">学生</span>35</div>
<div class="c" style="left:218px;top:628px">86</div>
<div class="c" style="left:282px;top:628px">91</div>
<div class="c" style="left:346px;top:628px">77</div>
<div class="c" style="left:410px;top:628px">69</div>
<div class="c" style="left:474px;top:628px">39</div>
<div class="c" style="left:538px;top:628px">47</div>
<div class="c" style="left:602px;top:628px">409</div>
<div class="c" style="left:26px;top:648px">36</div>
<div class="c" style="left:90px;top:648px">1901</div>
<div class="c" style="left:154px;top:648px"><span class="cj">学生</span>36</div>
<div class="c" style="left:218px;top:648px">80</div>
<div class="c" style="left:282px;top:648px">75</div>
<div class="c" style="left:346px;top:648px">98.5</div>
<div class="c" style="left:410px;top:648px">70</div>
<div class="c" style="left:474px;top:648px">40</div>
<div class="c" style="left:538px;top:648px">43</div>
<div class="c" style="left:602px;top:648px">406.5</div>
<div class="c" style="left:26px;top:668px">38</div>
<div class="c" style="left:90px;top:668px">1901</div>
<div class="c" style="left:154px;top:668px"><span class="cj">学生</span>38</div>
<div class="c" style="left:218px;top:668px">84.5</div>
<div class="c" style="left:282px;top:668px">70</div>
<div class="c" style="left:346px;top:668px">78</div>
<div class="c" style="left:410px;top:668px">73</div>
<div class="c" style="left:474px;top:668px">42</div>
<div class="c" style="left:538px;top:668px">57</div>
<div class="c" style="left:602px;top:668px">404.5</div>
<div class="c" style="left:26px;top:688px">39</div>
<div class="c" style="left:90px;top:688px">1901</div>
<div class="c" style="left:154px;top:688px"><span class="cj">学生</span>39</div>
<div class="c" style="left:218px;top:688px">93</div>
<div class="c" style="left:282px;top:688px">69</div>
<div class="c" style="left:346px;top:688px">75.5</div>
<div class="c" style="left:410px;top:688px">68</div>
<div class="c" style="left:474px;top:688px">47</div>
<div class="c" style="left:538px;top:688px">52</div>
<div class="c" style="left:602px;top:688px">404.5</div>
<div class="c" style="left:26px;top:708px">40</div>
<div class="c" style="left:90px;top:708px">1901</div>
<div class="c" style="left:154px;top:708px"><span class="cj">学生</span>40</div>
<div class="c" style="left:218px;top:708px">79.5</div>
<div class="c" style="left:282px;top:708px">89</div>
<div class="c" style="left:346px;top:708px">78.5</div>
<div class="c" style="left:410px;top:708px">53</div>
<div class="c" style="left:474px;top:708px">48</div>
<div class="c" style="left:538px;top:708px">56</div>
<div class="c" style="left:602px;top:708px">404</div>
<div class="c" style="left:26px;top:728px">41</div>
<div class="c" style="left:90px;top:728px">1901</div>
<div class="c" style="left:154px;top:728px"><span class="cj">学生</span>41</div>
<div class="c" style="left:218px;top:728px">89.5</div>
<div class="c" style="left:282px;top:728px">63</div>
<div class="c" style="left:346px;top:728px">85.5</div>
<div class="c" style="left:410px;top:728px">64</div>
<div class="c" style="left:474px;top:728px">51</div>
<div class="c" style="left:538px;top:728px">49</div>
<div class="c" style="left:602px;top:728px">402</div>
<div class="c" style="left:26px;top:748px">44</div>
<div class="c" style="left:90px;top:748px">1901</div>
<div class="c" style="left:154px;top:748px"><span class="cj">学生</span>44</div>
<div class="c" style="left:218px;top:748px">93.5</div>
<div class="c" style="left:282px;top:748px">70</div>
<div class="c" style="left:346px;top:748px">71</div>
<div class="c" style="left:410px;top:748px">60</div>
<div class="c" style="left:474px;top:748px">53</div>
<div class="c" style="left:538px;top:748px">51</div>
<div class="c" style="left:602px;top:748px">398.5</div>
<div class="c" style="left:26px;top:768px">49</div>
<div class="c" style="left:90px;top:768px">1901</div>
<div class="c" style="left:154px;top:768px"><span class="cj">学生</span>49</div>
<div class="c" style="left:218px;top:768px">89.5</div>
<div class="c" style="left:282px;top:768px">84</div>
<div class="c" style="left:346px;top:768px">70</div>
<div class="c" style="left:410px;top:768px">63</div>
<div class="c" style="left:474px;top:768px">40</div>
<div class="c" style="left:538px;top:768px">45</div>
<div class="c" style="left:602px;top:768px">391.5</div>
<div class="c" style="left:26px;top:788px">52</div>
<div class="c" style="left:90px;top:788px">1901</div>
<div class="c" style="left:154px;top:788px"><span class="cj">学生</span>52</div>
<div class="c" style="left:218px;top:788px">80</div>
<div class="c" style="left:282px;top:788px">73</div>
<div class="c" style="left:346px;top:788px">89.5</div>
<div class="c" style="left:410px;top:788px">58</div>
<div class="c" style="left:474px;top:788px">37</div>
<div class="c" style="left:538px;top:788px">49</div>
<div class="c" style="left:602px;top:788px">386.5</div>
<!-- selection -->
<div class="a" style="left:856px;top:266px;width:67px;height:23px;border:2px solid #217346"></div>
<div class="a" style="left:918px;top:284px;width:6px;height:6px;background:#217346;border:1px solid #fff;border-right:none;border-bottom:none"></div>

<!-- annotation -->
<div class="a" style="left:228px;top:143px;width:1054px;height:44px;border:3px solid #fe0000"></div>
<div class="a" style="left:902px;top:301px;font-family:'Liberation Mono','Noto Serif CJK SC',serif;font-size:18px;line-height:26px;color:#fe0000;white-space:nowrap;letter-spacing:-0.800px"><span style="font-size:20px;letter-spacing:0">同时按</span>ctrl+shift+<span style="font-size:20px;letter-spacing:0">回车键</span></div>
<svg class="a" style="left:900px;top:175px" width="70" height="100" viewBox="900 175 70 100">
 <path d="M921.500 259.500L939.500 199" stroke="#fe0000" stroke-width="3.200" stroke-linecap="round" fill="none"/>
 <path d="M944.500 182.500L933.800 198L945 201.300z" fill="#fe0000"/>
</svg>


<!-- ===== sheet tabs / scroll ===== -->
<!-- right edge of grid + vertical scrollbar -->
<div class="a" style="left:1578px;top:207px;width:1px;height:603px;background:#b8b8b8"></div>
<div class="a" style="left:1582px;top:190px;width:16px;height:620px;background:#f0f0f0"></div>
<div class="a" style="left:1582px;top:190px;width:15px;height:15px;border:1px solid #ababab;background:#fff"></div>
<div class="a" style="left:1582px;top:205px;width:15px;height:31px;border:1px solid #ababab;background:#fff"></div>
<div class="a" style="left:1582px;top:795px;width:15px;height:15px;border:1px solid #ababab;background:#fff"></div>
<svg class="a" style="left:1582px;top:190px" width="16" height="620" viewBox="0 0 16 620"><path d="M4 9h7l-3.500-4z" fill="#777"/><path d="M4 612h7l-3.500 4z" fill="#777"/></svg>
<!-- sheet tab bar -->
<div class="a" style="left:0;top:810px;width:1600px;height:28px;background:#f3f3f3"></div>
<div class="a" style="left:0;top:810px;width:1581px;height:1px;background:#ababab"></div>
<div class="a" style="left:100px;top:810px;width:69px;height:25px;background:#fff;border-left:1px solid #ababab;border-right:1px solid #ababab;border-bottom:2px solid #217346"></div>
<div class="a" style="left:112px;top:815px;font-size:13px;line-height:16px;font-weight:bold;color:#217346;letter-spacing:-0.2px">Sheet1</div>
<svg class="a" style="left:20px;top:812px" width="210" height="26" viewBox="20 812 210 26">
 <path d="M31 819v8l-4.500-4z" fill="#c6c6c6"/><path d="M56 819v8l4.500-4z" fill="#c6c6c6"/>
 <circle cx="209.500" cy="824" r="7.500" fill="#fff" stroke="#777" stroke-width="1"/>
 <path d="M205.500 824h8M209.500 820v8" stroke="#666" stroke-width="1.600"/>
</svg>
<!-- h scroll -->
<div class="a" style="left:960px;top:820px;width:2px;height:2px;background:#999"></div><div class="a" style="left:960px;top:824px;width:2px;height:2px;background:#999"></div><div class="a" style="left:960px;top:828px;width:2px;height:2px;background:#999"></div>
<div class="a" style="left:977px;top:817px;width:602px;height:15px;background:#e8e8e8"></div>
<div class="a" style="left:977px;top:817px;width:15px;height:15px;border:1px solid #ababab;background:#fff"></div>
<div class="a" style="left:992px;top:817px;width:312px;height:15px;border:1px solid #ababab;background:#fff"></div>
<div class="a" style="left:1564px;top:817px;width:15px;height:15px;border:1px solid #ababab;background:#fff"></div>
<svg class="a" style="left:977px;top:817px" width="602" height="15" viewBox="0 0 602 15"><path d="M9 4v7l-4-3.500z" fill="#666"/><path d="M592.500 4v7l4-3.500z" fill="#666"/></svg>


<!-- ===== status bar ===== -->
<div class="a" style="left:0;top:838px;width:1600px;height:22px;background:#217346"></div>
<div class="ui" style="left:6px;top:842px;color:#fff">就绪</div>
<div class="ui" style="left:1560px;top:842px;color:#fff">100%</div>
<div class="a" style="left:1303px;top:838px;width:38px;height:22px;background:#185c37"></div>
<svg class="a" style="left:40px;top:838px" width="1560" height="22" viewBox="40 838 1560 22">
 <!-- macro icon -->
 <rect x="54.500" y="845.500" width="9" height="9" fill="none" stroke="#fff" stroke-width="1"/><path d="M54.500 848.500h9M57.500 848.500v6M60.500 848.500v6M54.500 851.500h9" stroke="#fff" stroke-width="1"/>
 <circle cx="54.500" cy="845" r="2.800" fill="#fff"/>
 <!-- normal view -->
 <path d="M1315.500 842.500h13v13h-13zM1319.500 842.500v13M1324.500 842.500v13M1315.500 846.500h13M1315.500 851.500h13" stroke="#fff" stroke-width="1" fill="none"/>
 <!-- page layout -->
 <rect x="1353.500" y="842.500" width="13" height="13" fill="none" stroke="#fff" stroke-width="1"/><rect x="1356.500" y="845.500" width="7" height="7" fill="none" stroke="#fff" stroke-width="1"/><path d="M1358 848.500h4M1358 850.500h4" stroke="#fff" stroke-width="0.800"/>
 <!-- page break -->
 <rect x="1391.500" y="842.500" width="13" height="13" fill="none" stroke="#fff" stroke-width="1"/><rect x="1394" y="842" width="3" height="7" fill="#fff"/><rect x="1398" y="842" width="3" height="7" fill="#fff"/><path d="M1391.500 849.500h7" stroke="#fff" stroke-width="1"/>
 <!-- zoom -->
 <rect x="1422" y="848" width="6" height="2" fill="#fff"/>
 <rect x="1432" y="848.500" width="100" height="1" fill="#fff"/>
 <rect x="1480" y="843" width="4" height="11" fill="#fff"/>
 <path d="M1536 849h8M1540 845v8" stroke="#fff" stroke-width="1.800"/>
</svg>
<!-- watermark -->
<div class="a" id="wm" style="left:1220px;top:690px;width:300px;height:140px;opacity:.72;pointer-events:none">
 <svg class="a" style="left:0;top:0" width="300" height="140" viewBox="1220 690 300 140">
  <defs><filter id="wb" x="-10%" y="-10%" width="120%" height="120%"><feGaussianBlur stdDeviation="0.900"/></filter></defs>
  <g fill="#fff" stroke="#b4b4b4" stroke-width="1.800" filter="url(#wb)">
   <ellipse cx="1337" cy="724" rx="10.500" ry="14.500" transform="rotate(-18 1337 724)"/>
   <ellipse cx="1357" cy="704" rx="10.500" ry="14.500" transform="rotate(-6 1357 704)"/>
   <ellipse cx="1382" cy="706" rx="10.500" ry="14.500" transform="rotate(10 1382 706)"/>
   <ellipse cx="1398" cy="731" rx="10.500" ry="14.500" transform="rotate(22 1398 731)"/>
   <path d="M1368 726c10 0 15 9 23 17c8 8 14 13 13 23c-1 10-10 14-20 13c-8-1-11-2-16-2c-5 0-9 1-17 2c-10 1-18-3-19-13c-1-10 5-15 13-23c8-8 13-17 23-17z"/>
  </g>
 </svg>
 <div class="wmt" style="left:6px;top:31px;font-size:67px;line-height:67px;font-weight:bold;letter-spacing:-4px">Bai</div>
 <div class="wmt" style="left:123px;top:44px;font-size:41px;line-height:43px;font-weight:bold;letter-spacing:-2.500px">du</div>
 <div class="wmt" style="left:191px;top:32.500px;font-size:48px;line-height:60px;font-weight:bold;font-family:'Noto Sans CJK SC',sans-serif">经验</div>
 <div class="wmt" style="left:10px;top:94px;font-size:32px;line-height:40px;letter-spacing:1.500px">jingyan.baidu.com</div>
</div>

</body></html>
